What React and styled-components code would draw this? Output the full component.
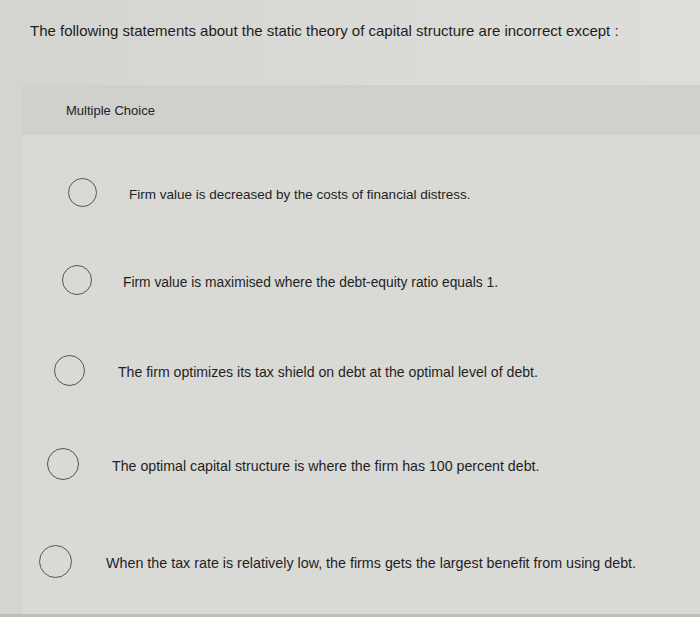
import React from "react";
import styled, { createGlobalStyle } from "styled-components";

const Global = createGlobalStyle`
  html, body { margin: 0; padding: 0; }
  body {
    background: #d7d7d4;
    font-family: "Liberation Sans", Arial, sans-serif;
    color: #262626;
  }
`;

const Page = styled.div`
  width: 700px;
  height: 617px;
  box-sizing: border-box;
  padding-top: 22px;
  background: linear-gradient(90deg, #d4d4d1 0%, #dadad7 55%, #dddddA 100%);
  overflow: hidden;
  display: flex;
  flex-direction: column;
  border-bottom: 3px solid #bdbdba;
`;

const Title = styled.h1`
  margin: 0 0 0 30px;
  font-size: 15px;
  font-weight: normal;
  line-height: 18px;
  color: #1e1e1e;
`;

const Panel = styled.section`
  margin: 45px 0 0 22px;
  flex: 1;
  display: flex;
  flex-direction: column;
  background: #d9d9d6;
`;

const PanelHeader = styled.div`
  height: 50px;
  display: flex;
  align-items: center;
  padding-left: 44px;
  background: #d0d0cd;
  font-size: 13px;
  color: #222;
`;

const OptionList = styled.div`
  display: flex;
  flex-direction: column;
  padding-top: 13px;
`;

const Option = styled.label`
  display: flex;
  align-items: center;
  height: ${(p) => p.$h}px;
  padding-left: ${(p) => p.$indent}px;
  color: #1f1f1f;
`;

const Radio = styled.span`
  width: ${(p) => p.$size}px;
  height: ${(p) => p.$size}px;
  box-sizing: border-box;
  border: 1.6px solid #555;
  border-radius: 50%;
  flex: none;
`;

const OptionText = styled.span`
  margin-left: ${(p) => p.$gap}px;
  padding-top: 4px;
  font-size: ${(p) => p.$fs}px;
`;

const options = [
  { text: "Firm value is decreased by the costs of financial distress.", indent: 46, size: 29, gap: 32, h: 88, fs: 13.5 },
  { text: "Firm value is maximised where the debt-equity ratio equals 1.", indent: 40, size: 30, gap: 31, h: 88, fs: 13.8 },
  { text: "The firm optimizes its tax shield on debt at the optimal level of debt.", indent: 32, size: 31, gap: 33, h: 92, fs: 14.1 },
  { text: "The optimal capital structure is where the firm has 100 percent debt.", indent: 25, size: 32, gap: 33, h: 96, fs: 14.2 },
  { text: "When the tax rate is relatively low, the firms gets the largest benefit from using debt.", indent: 17, size: 33, gap: 34, h: 98, fs: 14.3 },
];

export default function App() {
  return (
    <>
      <Global />
      <Page>
        <Title>The following statements about the static theory of capital structure are incorrect except :</Title>
        <Panel>
          <PanelHeader>Multiple Choice</PanelHeader>
          <OptionList>
            {options.map((o) => (
              <Option key={o.text} $indent={o.indent} $h={o.h}>
                <Radio $size={o.size} />
                <OptionText $gap={o.gap} $fs={o.fs}>{o.text}</OptionText>
              </Option>
            ))}
          </OptionList>
        </Panel>
      </Page>
    </>
  );
}
